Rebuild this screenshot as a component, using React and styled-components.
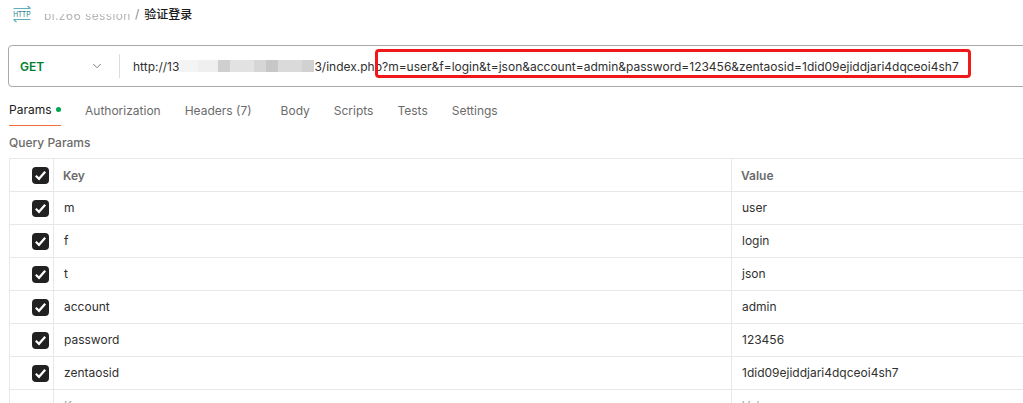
import styled, { createGlobalStyle } from "styled-components";
import { ChevronDown } from "lucide-react";

const TABS = [
  { label: "Authorization" },
  { label: "Headers (7)", gap: 29 },
  { label: "Body" },
  { label: "Scripts" },
  { label: "Tests" },
  { label: "Settings" },
];

const ROWS = [
  ["m", "user"],
  ["f", "login"],
  ["t", "json"],
  ["account", "admin"],
  ["password", "123456"],
  ["zentaosid", "1did09ejiddjari4dqceoi4sh7"],
];

const SMEARS = [
  [19, "#f4f4f4"],
  [20, "#efefef"],
  [12, "#cfcfcf"],
  [24, "#e2e2e2"],
  [12, "#d6d6d6"],
  [12, "#c7c7c7"],
  [24, "#dadada"],
  [12, "#d1d1d1"],
];

export default function App() {
  return (
    <>
      <GlobalStyle />
      <Page>
        <Crumbs>
          <HttpIcon />
          <Collection>bi.z66 session</Collection>
          <Slash>/</Slash>
          <RequestName>验证登录</RequestName>
        </Crumbs>

        <UrlBar>
          <Method>
            <MethodName>GET</MethodName>
            <ChevronDown size={14} strokeWidth={1.5} color="#6b6b6b" />
          </Method>
          <Url>
            http://13
            <Redacted>
              {SMEARS.map(([w, c], i) => (
                <Smear key={i} $w={w} $c={c} />
              ))}
            </Redacted>
            3/index.php?m=user&amp;f=login&amp;t=json&amp;account=admin&amp;password=123456&amp;zentaosid=1did09ejiddjari4dqceoi4sh7
          </Url>
          <Highlight />
        </UrlBar>

        <Tabs>
          <ActiveTab>
            Params
            <Dot />
          </ActiveTab>
          {TABS.map((t) => (
            <Tab key={t.label} $gap={t.gap}>
              {t.label}
            </Tab>
          ))}
        </Tabs>

        <SectionTitle>Query Params</SectionTitle>

        <Table>
          <Row>
            <CheckCell>
              <Check />
            </CheckCell>
            <HeadCell>Key</HeadCell>
            <HeadCell>Value</HeadCell>
          </Row>
          {ROWS.map(([k, v]) => (
            <Row key={k}>
              <CheckCell>
                <Check />
              </CheckCell>
              <Cell>{k}</Cell>
              <Cell>{v}</Cell>
            </Row>
          ))}
          <Row>
            <CheckCell />
            <Cell $empty>Key</Cell>
            <Cell $empty>Value</Cell>
          </Row>
        </Table>
      </Page>
    </>
  );
}

function HttpIcon() {
  return (
    <IconSvg width="18" height="20" viewBox="0 0 18 20">
      <path d="M0.5 4.5h17M14.5 2l3 2.5" stroke="#5fb0b8" strokeWidth="1.2" fill="none" />
      <text
        x="0.2"
        y="13.2"
        fontSize="8.6"
        textLength="17.4"
        lengthAdjust="spacingAndGlyphs"
        fontFamily="Liberation Sans, sans-serif"
        fill="#1f7f8a"
      >
        HTTP
      </text>
      <path d="M0.5 15.5h17M3.5 18l-3-2.5" stroke="#5fb0b8" strokeWidth="1.2" fill="none" />
    </IconSvg>
  );
}

function Check() {
  return (
    <CheckBox>
      <svg width="13" height="11" viewBox="0 0 13 11">
        <path d="M1.8 5.8l3.2 3 6.2-7" stroke="#fff" strokeWidth="2.2" fill="none" />
      </svg>
    </CheckBox>
  );
}

const GlobalStyle = createGlobalStyle`
  html, body {
    margin: 0;
    height: 403px;
    overflow: hidden;
    background: #fff;
  }
  body {
    font-family: Inter, "Noto Sans CJK SC", sans-serif;
    font-size: 12px;
    color: #212121;
  }
`;

const Page = styled.div`
  width: 1023px;
  height: 403px;
  overflow: hidden;
  padding-left: 8px;
  box-sizing: border-box;
`;

const Crumbs = styled.div`
  display: flex;
  align-items: center;
  height: 28px;
  padding-left: 5px;
  margin-bottom: 17px;
`;

const IconSvg = styled.svg`
  flex: none;
  margin-right: 13px;
`;

const Collection = styled.span`
  position: relative;
  width: 85px;
  margin-top: 2px;
  color: #b5b5b5;
  letter-spacing: 0.35px;
  white-space: nowrap;
  filter: blur(0.5px);
  &::before {
    content: "";
    position: absolute;
    left: -6px;
    right: -2px;
    top: -3px;
    height: 9px;
    background: #fff;
  }
`;

const Slash = styled.span`
  margin: 0 5px 2px 6px;
  color: #8a8a8a;
`;

const RequestName = styled.span`
  margin-bottom: 2px;
  font-weight: 500;
  color: #1a1a1a;
`;

const UrlBar = styled.div`
  position: relative;
  display: flex;
  align-items: center;
  width: 1030px;
  height: 42px;
  box-sizing: border-box;
  border: 1px solid #a9a9a9;
  border-radius: 4px;
`;

const Method = styled.div`
  display: flex;
  align-items: center;
  justify-content: space-between;
  box-sizing: border-box;
  width: 111px;
  height: 24px;
  padding: 0 15px 0 11px;
  border-right: 1px solid #dcdcdc;
`;

const MethodName = styled.span`
  font-weight: 600;
  color: #007f31;
`;

const Url = styled.div`
  display: flex;
  align-items: center;
  padding-left: 13px;
  white-space: pre;
  color: #303030;
`;

const Redacted = styled.span`
  display: flex;
  height: 12px;
`;

const Smear = styled.span`
  width: ${(p) => p.$w}px;
  background: ${(p) => p.$c};
`;

const Highlight = styled.div`
  position: absolute;
  left: 366px;
  top: 3px;
  width: 596px;
  height: 29px;
  box-sizing: border-box;
  border: 3px solid #f01818;
  border-radius: 4px;
`;

const Tabs = styled.div`
  display: flex;
  height: 39px;
`;

const Tab = styled.div`
  display: flex;
  align-items: center;
  height: 100%;
  box-sizing: border-box;
  padding-top: 7px;
  margin-right: ${(p) => p.$gap || 24}px;
  color: #6b6b6b;
`;

const ActiveTab = styled(Tab)`
  margin-left: 1px;
  width: 52px;
  color: #212121;
  border-bottom: 1px solid #f26b3a;
`;

const Dot = styled.span`
  flex: none;
  width: 5px;
  height: 5px;
  margin-left: 4px;
  border-radius: 50%;
  background: #00a651;
`;

const SectionTitle = styled.div`
  display: flex;
  align-items: center;
  height: 32px;
  padding-left: 1px;
  font-size: 12px;
  font-weight: 500;
  color: #6b6b6b;
`;

const Table = styled.div`
  margin-left: 1px;
  width: 1030px;
  border-top: 1px solid #e8e8e8;
  border-left: 1px solid #e8e8e8;
`;

const Row = styled.div`
  display: grid;
  grid-template-columns: 44px 678px 1fr;
  height: 33px;
  box-sizing: border-box;
  border-bottom: 1px solid #e8e8e8;
`;

const CheckCell = styled.div`
  display: flex;
  align-items: center;
  justify-content: flex-end;
  padding-right: 4px;
  border-right: 1px solid #e8e8e8;
`;

const CheckBox = styled.span`
  display: flex;
  align-items: center;
  justify-content: center;
  width: 17px;
  height: 17px;
  border-radius: 4px;
  background: #212121;
`;

const Cell = styled.div`
  display: flex;
  align-items: center;
  padding: 0 0 1px 10px;
  border-right: 1px solid #e8e8e8;
  color: ${(p) => (p.$empty ? "#a6a6a6" : "#303030")};
`;

const HeadCell = styled(Cell)`
  padding: 1px 0 0 9px;
  font-weight: 600;
  color: #6b6b6b;
`;
